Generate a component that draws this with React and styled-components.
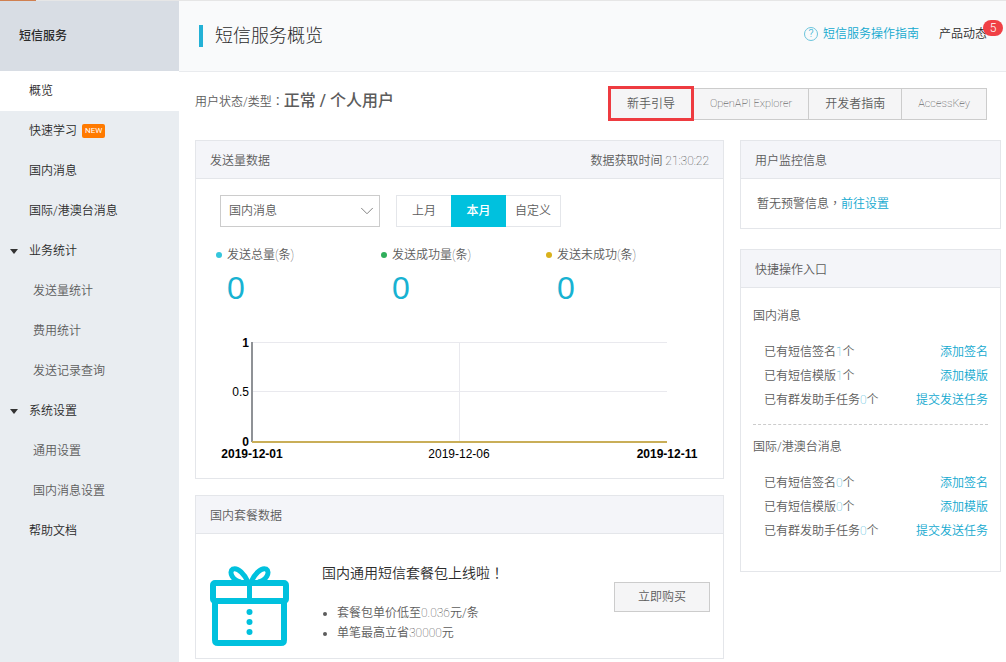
import React, { useState } from "react";
import styled, { createGlobalStyle, ThemeProvider, css } from "styled-components";
import { ChevronDown } from "lucide-react";

const theme = {
    colors: {
        primary: "#00c1de",
        link: "#12a9cf",
        text: "#5c5c5c",
        dark: "#2b2b2b",
        border: "#e4e6ea",
        cardHead: "#f4f5f9",
        sidebar: "#e9edf1",
        sidebarHead: "#d8dde4",
        red: "#f04045",
        orange: "#ff7a00",
    },
    fontSizes: {
        xsmall: "8px",
        tiny: "11px",
        small: "12px",
        medium: "14px",
        large: "16px",
        xlarge: "18px",
        huge: "32px",
    },
}

const menu = [
    { label: "概览", active: true },
    { label: "快速学习", isNew: true },
    { label: "国内消息" },
    { label: "国际/港澳台消息" },
    { label: "业务统计", group: true },
    { label: "发送量统计", sub: true },
    { label: "费用统计", sub: true },
    { label: "发送记录查询", sub: true },
    { label: "系统设置", group: true },
    { label: "通用设置", sub: true },
    { label: "国内消息设置", sub: true },
    { label: "帮助文档" },
]

const stats = [
    { label: "发送总量", value: 0, color: "#35c6dc" },
    { label: "发送成功量", value: 0, color: "#2fae5b" },
    { label: "发送未成功", value: 0, color: "#d9b11c" },
]

const quickEntries = [
    {
        title: "国内消息",
        rows: [
            { label: "已有短信签名", count: 1, action: "添加签名" },
            { label: "已有短信模版", count: 1, action: "添加模版" },
            { label: "已有群发助手任务", count: 0, action: "提交发送任务" },
        ],
    },
    {
        title: "国际/港澳台消息",
        rows: [
            { label: "已有短信签名", count: 0, action: "添加签名" },
            { label: "已有短信模版", count: 0, action: "添加模版" },
            { label: "已有群发助手任务", count: 0, action: "提交发送任务" },
        ],
    },
]

const periods = ["上月", "本月", "自定义"]

const SendChart = () => (
    <StyledChart viewBox="0 0 527 153" role="img" aria-label="发送量">
        <g stroke="#e9e9ee" strokeWidth="1">
            <path d="M57 17.5H471M57 66.5H471M263.5 17V116" />
        </g>
        <path d="M56 17V117" stroke="#8f9296" strokeWidth="2" />
        <path d="M56 117H471" stroke="#c9ae58" strokeWidth="2" />
        <g textAnchor="end">
            <text x="53" y="22" fontWeight="700">1</text>
            <text x="53" y="71">0.5</text>
            <text x="53" y="121" fontWeight="700">0</text>
        </g>
        <g textAnchor="middle">
            <text x="56" y="133" fontWeight="700">2019-12-01</text>
            <text x="263" y="133">2019-12-06</text>
            <text x="471" y="133" fontWeight="700">2019-12-11</text>
        </g>
    </StyledChart>
)

const GiftIcon = () => (
    <StyledGift viewBox="0 0 80 82" aria-hidden="true">
        <g fill="none" stroke="#00c1de" strokeWidth="6" strokeLinejoin="round">
            <rect x="3" y="17" width="73" height="18" rx="2" />
            <path d="M5 35V74Q5 77 8 77H71Q74 77 74 74V35" />
            <path d="M39.5 16V35" strokeWidth="5" />
            <path d="M38 16C35 9 28 1 23 3C18 6 23 15 31 16" strokeWidth="5" />
            <path d="M41 16C44 9 51 1 56 3C61 6 56 15 48 16" strokeWidth="5" />
        </g>
        <g fill="#00c1de">
            <circle cx="39.5" cy="46" r="3" />
            <circle cx="39.5" cy="56" r="3" />
            <circle cx="39.5" cy="66" r="3" />
        </g>
    </StyledGift>
)

const Sidebar = () => (
    <StyledSidebar>
        <SidebarTitle>短信服务</SidebarTitle>
        <MenuList>
            {menu.map(({ label, active, isNew, group, sub }) => (
                <li key={label}>
                    <MenuLink href="#" $active={active} $sub={sub}>
                        {group && <Caret />}
                        {label}
                        {isNew && <NewTag>NEW</NewTag>}
                    </MenuLink>
                </li>
            ))}
        </MenuList>
    </StyledSidebar>
)

const SendCard = () => {
    const [period, setPeriod] = useState("本月")

    return (
        <Card>
            <CardHead>
                <CardTitle>发送量数据</CardTitle>
                <span>数据获取时间 <Thin>21:30:22</Thin></span>
            </CardHead>
            <Filters>
                <SelectBox>
                    <StyledSelect aria-label="消息类型" defaultValue="国内消息">
                        <option>国内消息</option>
                        <option>国际/港澳台消息</option>
                    </StyledSelect>
                    <ChevronDown size={22} strokeWidth={1} color="#777" />
                </SelectBox>
                <Segments>
                    {periods.map((name) => (
                        <Segment
                            key={name}
                            type="button"
                            $active={name === period}
                            onClick={() => setPeriod(name)}
                        >
                            {name}
                        </Segment>
                    ))}
                </Segments>
            </Filters>
            <Stats>
                {stats.map(({ label, value, color }) => (
                    <Stat key={label}>
                        <Dot $color={color} />
                        <span>{label}<Thin>(</Thin>条<Thin>)</Thin></span>
                        <StatValue>{value}</StatValue>
                    </Stat>
                ))}
            </Stats>
            <SendChart />
        </Card>
    )
}

const App = () => (
    <ThemeProvider theme={theme}>
        <GlobalStyle />
        <TopStrip><TopMark /></TopStrip>
        <Page>
            <Sidebar />
            <Content>
                <Header>
                    <PageTitle>短信服务概览</PageTitle>
                    <HeaderLinks>
                        <GuideLink href="#"><HelpMark>?</HelpMark>短信服务操作指南</GuideLink>
                        <NewsLink href="#">产品动态<Badge>5</Badge></NewsLink>
                    </HeaderLinks>
                </Header>
                <StatusRow>
                    <Status>用户状态/类型<Mark>：</Mark><strong>正常 / 个人用户</strong></Status>
                    <ButtonGroup>
                        <GroupButton type="button" $marked>新手引导</GroupButton>
                        <GroupButton type="button"><SmallThin>OpenAPI Explorer</SmallThin></GroupButton>
                        <GroupButton type="button">开发者指南</GroupButton>
                        <GroupButton type="button"><SmallThin>AccessKey</SmallThin></GroupButton>
                    </ButtonGroup>
                </StatusRow>
                <Columns>
                    <Column $gap="16px">
                        <SendCard />
                        <Card>
                            <CardHead><CardTitle>国内套餐数据</CardTitle></CardHead>
                            <Promo>
                                <GiftIcon />
                                <PromoText>
                                    <PromoTitle>国内通用短信套餐包上线啦<Mark>！</Mark></PromoTitle>
                                    <PromoList>
                                        <li>套餐包单价低至<Thin>0.036</Thin>元/条</li>
                                        <li>单笔最高立省<Thin>30000</Thin>元</li>
                                    </PromoList>
                                </PromoText>
                                <BuyButton type="button">立即购买</BuyButton>
                            </Promo>
                        </Card>
                    </Column>
                    <Column $gap="20px">
                        <Card>
                            <CardHead><CardTitle>用户监控信息</CardTitle></CardHead>
                            <Notice>暂无预警信息<Mark>，</Mark><Link href="#">前往设置</Link></Notice>
                        </Card>
                        <Card>
                            <CardHead><CardTitle>快捷操作入口</CardTitle></CardHead>
                            <QuickBody>
                                {quickEntries.map(({ title, rows }) => (
                                    <QuickGroup key={title}>
                                        <QuickTitle>{title}</QuickTitle>
                                        {rows.map(({ label, count, action }) => (
                                            <QuickRow key={label}>
                                                <span>{label}<Count>{count}</Count>个</span>
                                                <Link href="#">{action}</Link>
                                            </QuickRow>
                                        ))}
                                    </QuickGroup>
                                ))}
                            </QuickBody>
                        </Card>
                    </Column>
                </Columns>
            </Content>
        </Page>
    </ThemeProvider>
)

export default App

const GlobalStyle = createGlobalStyle`
    *, *::before, *::after {
        box-sizing: border-box;
    }
    body {
        margin: 0;
        background: #fff;
        color: #5c5c5c;
        font-family: Roboto, "Noto Sans CJK SC", sans-serif;
        font-size: 12px;
        font-weight: 350;
        line-height: 20px;
    }
    #root {
        display: flex;
        flex-direction: column;
        min-height: 100vh;
    }
    button, select {
        font: inherit;
        color: inherit;
    }
    a {
        text-decoration: none;
    }
    h1, h2, h3, ul {
        margin: 0;
        padding: 0;
    }
`

const Thin = styled.span`
    font-weight: 100;
    color: #333;
`

const SmallThin = styled(Thin)`
    font-size: ${({ theme }) => theme.fontSizes.tiny};
`

// full-width punctuation centred in its box
const Mark = styled.span`
    font-family: "Noto Sans CJK TC", sans-serif;
`

const Link = styled.a`
    color: ${({ theme }) => theme.colors.link};
`

const TopStrip = styled.div`
    height: 1px;
    background: #e6e6e6;
`

const TopMark = styled.div`
    width: 36px;
    height: 1px;
    background: #d08050;
`

const Page = styled.div`
    display: flex;
    flex: 1;
`

const StyledSidebar = styled.nav`
    flex: 0 0 179px;
    background: ${({ theme }) => theme.colors.sidebar};
`

const SidebarTitle = styled.h2`
    display: flex;
    align-items: center;
    height: 70px;
    padding-left: 19px;
    background: ${({ theme }) => theme.colors.sidebarHead};
    color: ${({ theme }) => theme.colors.dark};
    font-size: ${({ theme }) => theme.fontSizes.small};
    font-weight: 500;
`

const MenuList = styled.ul`
    list-style: none;
`

const MenuLink = styled.a`
    position: relative;
    display: flex;
    align-items: center;
    height: 40px;
    padding-left: ${({ $sub }) => ($sub ? "33px" : "29px")};
    color: ${({ $sub, theme }) => ($sub ? theme.colors.text : theme.colors.dark)};
    background: ${({ $active }) => ($active ? "#fff" : "transparent")};
`

const Caret = styled.span`
    position: absolute;
    left: 10px;
    border: 4px solid transparent;
    border-top: 5px solid #333;
    border-bottom: 0;
`

const NewTag = styled.span`
    height: 14px;
    margin-left: 5px;
    padding: 0 3px;
    border-radius: 2px;
    background: ${({ theme }) => theme.colors.orange};
    color: #fff;
    font-size: ${({ theme }) => theme.fontSizes.xsmall};
    font-weight: 400;
    line-height: 14px;
`

const Content = styled.main`
    flex: 1;
    min-width: 0;
`

const Header = styled.header`
    display: flex;
    align-items: center;
    justify-content: space-between;
    height: 71px;
    padding: 0 19px 0 20px;
    border-bottom: 1px solid #e9ebee;
    background: #f9fafb;
`

const PageTitle = styled.h1`
    display: flex;
    align-items: center;
    gap: 12px;
    color: ${({ theme }) => theme.colors.dark};
    font-size: ${({ theme }) => theme.fontSizes.xlarge};
    font-weight: 300;

    &::before {
        content: "";
        width: 4px;
        height: 22px;
        background: #23b1d6;
    }
`

const HeaderLinks = styled.div`
    display: flex;
    gap: 20px;
    padding-bottom: 4px;
`

const GuideLink = styled(Link)`
    display: flex;
    align-items: center;
    gap: 5px;
`

const HelpMark = styled.span`
    width: 14px;
    height: 14px;
    border: 1px solid #6cc4dc;
    border-radius: 50%;
    font-size: ${({ theme }) => theme.fontSizes.tiny};
    font-weight: 300;
    line-height: 12px;
    text-align: center;
`

const NewsLink = styled.a`
    position: relative;
    color: ${({ theme }) => theme.colors.dark};
`

const Badge = styled.span`
    position: absolute;
    top: -4px;
    right: -16px;
    width: 20px;
    height: 16px;
    border-radius: 8px;
    background: ${({ theme }) => theme.colors.red};
    color: #fff;
    line-height: 16px;
    text-align: center;
`

const StatusRow = styled.div`
    display: flex;
    align-items: center;
    justify-content: space-between;
    padding: 14px 19px 19px 16px;
`

const Status = styled.p`
    margin: 0;
    padding-bottom: 4px;

    strong {
        font-size: ${({ theme }) => theme.fontSizes.large};
        font-weight: 500;
    }
`

const ButtonGroup = styled.div`
    display: flex;
    align-items: center;
`

const GroupButton = styled.button`
    height: 32px;
    padding: 0 16px;
    border: 1px solid #ccc;
    border-left-width: 0;
    background: #f5f5f6;

    ${({ $marked }) => $marked && css`
        height: 35px;
        border: 3px solid #ee3b40;
    `}
`

const Columns = styled.div`
    display: grid;
    grid-template-columns: minmax(0, 1fr) 261px;
    gap: 16px;
    align-items: start;
    padding: 0 5px 3px 16px;
`

const Column = styled.div`
    display: flex;
    flex-direction: column;
    gap: ${({ $gap }) => $gap};
`

const Card = styled.section`
    border: 1px solid ${({ theme }) => theme.colors.border};
    background: #fff;
`

const CardHead = styled.div`
    display: flex;
    align-items: center;
    justify-content: space-between;
    height: 38px;
    padding: 2px 14px 0;
    border-bottom: 1px solid ${({ theme }) => theme.colors.border};
    background: ${({ theme }) => theme.colors.cardHead};
`

const CardTitle = styled.h2`
    font-size: ${({ theme }) => theme.fontSizes.small};
    font-weight: inherit;
`

const Filters = styled.div`
    display: flex;
    gap: 16px;
    padding: 16px 24px 0;
`

const SelectBox = styled.div`
    position: relative;

    svg {
        position: absolute;
        top: 5px;
        right: 2px;
        pointer-events: none;
    }
`

const StyledSelect = styled.select`
    width: 160px;
    height: 32px;
    padding: 0 8px;
    border: 1px solid #ccc;
    border-radius: 0;
    background: #fff;
    appearance: none;
`

const Segments = styled.div`
    display: flex;
`

const Segment = styled.button`
    width: 55px;
    height: 32px;
    padding: 0;
    border: 1px solid ${({ theme }) => theme.colors.border};
    border-width: 1px 0;
    background: #fff;

    &:first-child {
        border-left-width: 1px;
    }
    &:last-child {
        border-right-width: 1px;
    }

    ${({ $active, theme }) => $active && css`
        border-color: ${theme.colors.primary};
        background: ${theme.colors.primary};
        color: #fff;
        font-weight: 500;
    `}
`

const Stats = styled.div`
    display: flex;
    padding: 18px 0 0 20px;
`

const Stat = styled.div`
    display: grid;
    grid-template-columns: 6px auto;
    justify-content: start;
    align-items: center;
    column-gap: 5px;
    width: 165px;
`

const Dot = styled.span`
    width: 6px;
    height: 6px;
    border-radius: 50%;
    background: ${({ $color }) => $color};
`

const StatValue = styled.span`
    grid-column: 2;
    color: #18b2d2;
    font-family: "Liberation Sans", sans-serif;
    font-size: ${({ theme }) => theme.fontSizes.huge};
    line-height: 46px;
`

const StyledChart = styled.svg`
    display: block;
    width: 100%;
    margin-top: 14px;

    text {
        fill: #000;
        font-family: "Liberation Sans", sans-serif;
        font-size: 12px;
        font-weight: 400;
    }
    text[font-weight="700"] {
        font-weight: 700;
    }
`

const Promo = styled.div`
    display: flex;
    align-items: center;
    padding: 20px 13px 4px 14px;
`

const StyledGift = styled.svg`
    width: 80px;
    height: 82px;
    margin: 12px 32px 6px 0;
`

const PromoText = styled.div`
    flex: 1;
    padding-bottom: 4px;
`

const PromoTitle = styled.h3`
    margin-bottom: 20px;
    color: ${({ theme }) => theme.colors.dark};
    font-size: ${({ theme }) => theme.fontSizes.medium};
    font-weight: inherit;
`

const PromoList = styled.ul`
    padding-left: 15px;
`

const BuyButton = styled.button`
    width: 96px;
    height: 30px;
    margin-bottom: 14px;
    border: 1px solid #ccc;
    background: #f5f5f6;
`

const Notice = styled.p`
    margin: 0;
    padding: 14px 16px;
`

const QuickBody = styled.div`
    padding: 18px 12px 16px;
`

const QuickGroup = styled.div`
    padding-bottom: 12px;

    & + & {
        padding-top: 12px;
        border-top: 1px dashed #ccc;
    }
`

const QuickTitle = styled.h3`
    margin-bottom: 14px;
    font-size: ${({ theme }) => theme.fontSizes.small};
    font-weight: inherit;
`

const QuickRow = styled.div`
    display: flex;
    justify-content: space-between;
    padding-left: 11px;
    line-height: 24px;
`

const Count = styled(Thin)`
    color: ${({ theme }) => theme.colors.link};
`
